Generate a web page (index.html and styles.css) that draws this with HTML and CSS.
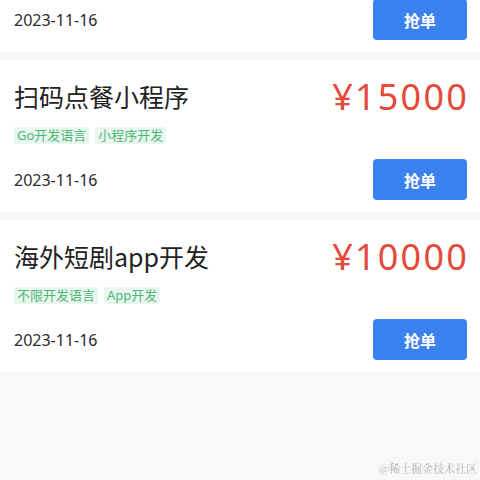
FILE: index.html
```html
<!DOCTYPE html>
<html lang="zh">
<head>
<meta charset="utf-8">
<link rel="stylesheet" href="styles.css">
</head>
<body>
<div class="list">
  <div class="card card-partial">
    <div class="foot">
      <span class="date">2023-11-16</span>
      <button class="grab">抢单</button>
    </div>
  </div>
  <div class="card">
    <div class="head">
      <span class="title">扫码点餐小程序</span>
      <span class="price">¥15000</span>
    </div>
    <div class="tags">
      <span class="tag">Go开发语言</span>
      <span class="tag">小程序开发</span>
    </div>
    <div class="foot">
      <span class="date">2023-11-16</span>
      <button class="grab">抢单</button>
    </div>
  </div>
  <div class="card">
    <div class="head">
      <span class="title">海外短剧app开发</span>
      <span class="price">¥10000</span>
    </div>
    <div class="tags">
      <span class="tag">不限开发语言</span>
      <span class="tag">App开发</span>
    </div>
    <div class="foot">
      <span class="date">2023-11-16</span>
      <button class="grab">抢单</button>
    </div>
  </div>
</div>
<div class="watermark">@稀土掘金技术社区</div>
</body>
</html>
```
FILE: styles.css
```css
html, body {
  margin: 0;
  padding: 0;
}
body {
  width: 480px;
  height: 480px;
  overflow: hidden;
  background: #f8f8f8;
  font-family: "Noto Sans", "Liberation Sans", "Noto Sans CJK SC", sans-serif;
  position: relative;
}
.list {
  display: flex;
  flex-direction: column;
  gap: 8px;
}
.card {
  background: #ffffff;
  padding: 12px 13px 12px 14px;
  display: flex;
  flex-direction: column;
}
.card-partial {
  padding-top: 0;
  margin-top: -1px;
}
.head {
  height: 48px;
  display: flex;
  align-items: center;
  justify-content: space-between;
}
.title {
  font-size: 25px;
  color: #222222;
  font-family: "Noto Sans CJK SC", sans-serif;
}
.price {
  font-size: 36px;
  color: #e5493a;
  letter-spacing: 2.2px;
  margin-right: -2px;
  font-family: "Noto Sans", "Noto Sans CJK SC", sans-serif;
}
.tags {
  display: flex;
  gap: 6px;
  margin-top: 7px;
}
.tag {
  height: 17px;
  line-height: 17px;
  padding: 0 3px;
  font-size: 13px;
  color: #4eb77a;
  background: #e8f6ee;
  border-radius: 2px;
  font-family: "Noto Sans", "Noto Sans CJK SC", sans-serif;
}
.foot {
  display: flex;
  align-items: center;
  justify-content: space-between;
  margin-top: 15px;
}
.card-partial .foot {
  margin-top: 0;
}
.date {
  font-size: 16px;
  color: #2a2a2a;
  font-family: "Noto Sans", sans-serif;
}
.grab {
  width: 94px;
  height: 41px;
  border: none;
  border-radius: 4px;
  background: #3b82f0;
  color: #ffffff;
  font-size: 16px;
  font-weight: bold;
  font-family: "Noto Sans CJK SC", sans-serif;
  padding: 0;
}
.watermark {
  position: absolute;
  right: 3px;
  bottom: 4px;
  font-size: 11px;
  color: #b4b4b4;
  font-family: "Noto Serif CJK SC", "Noto Sans CJK SC", serif;
}
```
